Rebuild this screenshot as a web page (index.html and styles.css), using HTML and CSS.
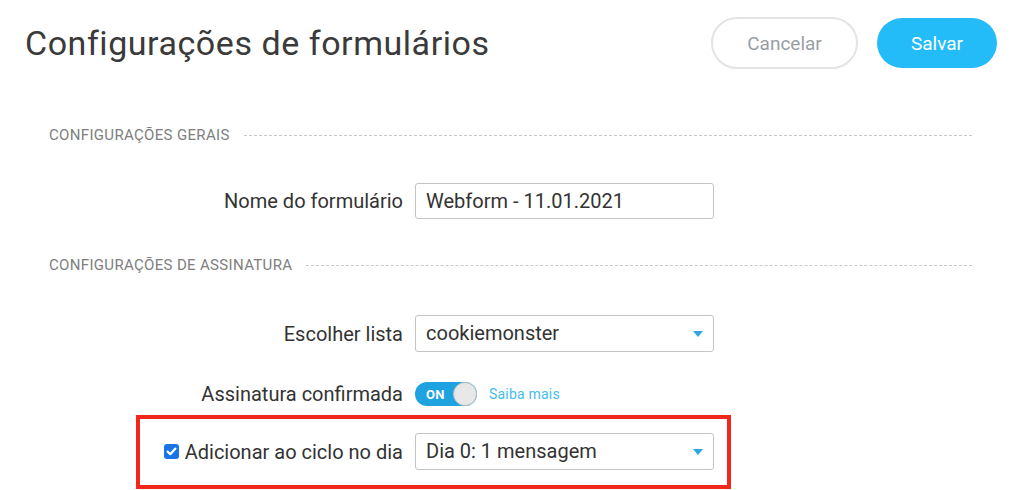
FILE: index.html
```html
<!DOCTYPE html>
<html lang="pt">
<head>
<meta charset="utf-8">
<title>Configurações de formulários</title>
<link rel="stylesheet" href="styles.css">
</head>
<body>
<header class="top">
  <h1 class="title">Configurações de formulários</h1>
  <div class="actions">
    <button class="btn btn-cancel">Cancelar</button>
    <button class="btn btn-save">Salvar</button>
  </div>
</header>

<section class="section sec-general">
  <div class="sec-head"><span class="sec-title">CONFIGURAÇÕES GERAIS</span><span class="sec-line"></span></div>
  <div class="row row-name">
    <label class="row-label">Nome do formulário</label>
    <div class="field">Webform - 11.01.2021</div>
  </div>
</section>

<section class="section sec-sub">
  <div class="sec-head"><span class="sec-title">CONFIGURAÇÕES DE ASSINATURA</span><span class="sec-line"></span></div>
  <div class="row row-list">
    <label class="row-label">Escolher lista</label>
    <div class="field select">cookiemonster<span class="caret"></span></div>
  </div>
  <div class="row row-toggle">
    <label class="row-label">Assinatura confirmada</label>
    <div class="toggle-wrap">
      <span class="toggle"><span class="toggle-on">ON</span><span class="knob"></span></span>
      <a class="more">Saiba mais</a>
    </div>
  </div>
  <div class="row row-cycle">
    <label class="row-label"><span class="check"><svg viewBox="0 0 15 15" width="15" height="15"><rect x="0" y="0" width="15" height="15" rx="3" fill="#1a73e8"/><path d="M3.6 7.6 L6.3 10.2 L11.4 4.6" fill="none" stroke="#fff" stroke-width="2.2" stroke-linecap="round" stroke-linejoin="round"/></svg></span>Adicionar ao ciclo no dia</label>
    <div class="field select">Dia 0: 1 mensagem<span class="caret"></span></div>
  </div>
</section>
</body>
</html>
```

FILE: styles.css
```css
*, *::before, *::after { box-sizing: border-box; }
html, body { margin: 0; padding: 0; background: #fff; }
body {
  font-family: Roboto, "Noto Sans", "Liberation Sans", sans-serif;
  color: #333;
  width: 1024px;
  height: 490px;
  overflow: hidden;
}
.top {
  display: flex;
  justify-content: space-between;
  align-items: center;
  padding: 17px 27px 0 25px;
  height: 69px;
}
.title {
  margin: 0;
  font-weight: 400;
  font-size: 34px;
  letter-spacing: 0.55px;
  color: #3a3a3a;
  line-height: 40px;
}
.actions { display: flex; align-items: center; gap: 19px; }
.btn {
  font-family: inherit;
  font-size: 19px;
  border-radius: 26px;
  cursor: pointer;
}
.btn-cancel {
  width: 147px; height: 52px;
  border: 2px solid #e4e4e4;
  background: #fff;
  color: #999ea4;
}
.btn-save {
  width: 120px; height: 50px;
  border: none;
  background: #23bcf9;
  color: #fff;
}
.sec-general { margin-top: 58px; }
.sec-head {
  display: flex;
  align-items: center;
  gap: 14px;
  padding: 0 52px 0 49px;
  height: 16px;
}
.sec-title {
  font-size: 15px;
  letter-spacing: 0.33px;
  color: #7e7e7e;
  white-space: nowrap;
}
.sec-line { flex: 1; border-top: 1px dashed #c9c9c9; }
.row {
  display: grid;
  grid-template-columns: 403px 299px;
  column-gap: 12px;
  align-items: center;
  position: relative;
}
.row-label {
  font-size: 20px;
  color: #333;
  display: flex;
  justify-content: flex-end;
  align-items: center;
}
.field {
  height: 36px;
  border: 1px solid #c4c4c4;
  border-radius: 3px;
  padding: 0 10px;
  font-size: 20px;
  line-height: 34px;
  color: #333;
  position: relative;
}
.row-name { margin-top: 40px; }
.sec-sub { margin-top: 38px; }
.row-list { margin-top: 42px; }
.row-list .field { height: 37px; line-height: 35px; }
.select .caret {
  position: absolute;
  right: 10px;
  top: 15px;
  width: 0; height: 0;
  border-left: 5px solid transparent;
  border-right: 5px solid transparent;
  border-top: 6px solid #2ba6e8;
}
.row-toggle { margin-top: 30px; }
.toggle-wrap { display: flex; align-items: center; gap: 12px; }
.toggle {
  width: 62px; height: 24px;
  border-radius: 12px;
  background: #1ea3e0;
  display: flex;
  align-items: center;
  justify-content: space-between;
  padding: 0 0 0 11px;
}
.toggle-on { color: #fff; font-weight: 700; font-size: 13px; letter-spacing: 0.3px; }
.knob {
  width: 24px; height: 24px;
  border-radius: 50%;
  background: #e8e8e8;
  border: 1px solid #bdbdbd;
}
.more { color: #45bcef; font-size: 14px; letter-spacing: 0.2px; }
.row-cycle { margin-top: 27px; }
.row-cycle .field { height: 37px; line-height: 35px; }
.check { display: inline-flex; margin-right: 6px; }
.row-cycle::after {
  content: "";
  position: absolute;
  left: 136px;
  width: 595px;
  top: -18px;
  bottom: -19px;
  border: 4px solid #f2261b;
  pointer-events: none;
}
```
